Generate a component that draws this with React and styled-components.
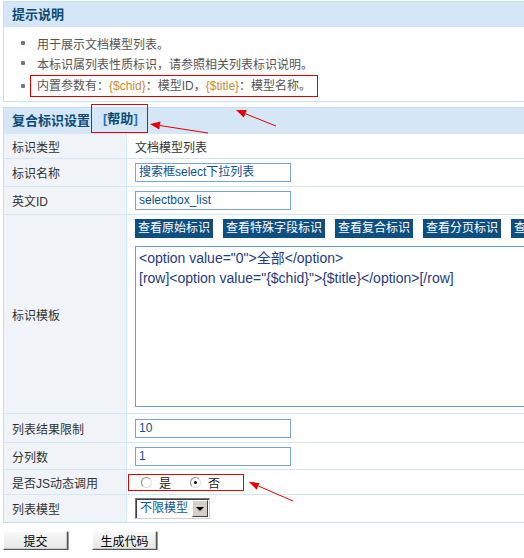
import React from "react";
import styled, { createGlobalStyle } from "styled-components";

const Global = createGlobalStyle`
  html, body { margin: 0; padding: 0; background: #fff; overflow: hidden; }
  body { font-family: "Liberation Sans", Arial, "Noto Sans CJK SC", sans-serif; font-size: 12px; color: #333; }
`;

const Page = styled.div`
  position: relative;
  width: 620px;
  padding: 1px 0 0 3px;
`;

const Panel = styled.div`
  border: 1px solid #c6e0f2;
  margin-top: ${(p) => p.$top || 0}px;
`;

const PanelHead = styled.div`
  height: 25px;
  line-height: 25px;
  padding-left: 8px;
  background: #d5e6f6;
  color: #0b4a78;
  font-size: 13px;
  font-weight: bold;
  display: flex;
  align-items: center;
  gap: 1px;
`;

const HelpLink = styled.a`
  color: #0b4a78;
  text-decoration: none;
  border: 1px solid #e60000;
  padding: 0 9px 0 11px;
  height: 27px;
  line-height: 27px;
  margin-top: -4px;
  span { color: #2a6fc0; }
`;

const Tips = styled.ul`
  list-style: none;
  margin: 0;
  padding: 6px 0 2px 0;
`;

const Tip = styled.li`
  height: ${(p) => p.$h || 20}px;
  display: flex;
  align-items: center;
  padding-left: 17px;
  color: #555;
  font-size: 12px;
  &::before {
    content: "";
    width: 4px;
    height: 4px;
    border-radius: 1px;
    background: #6a7888;
    margin-right: ${(p) => (p.$boxed ? 5 : 12)}px;
  }
`;

const Marked = styled.span`
  border: 1px solid #e60000;
  height: 20px;
  line-height: 20px;
  padding: 0 6px 0 6px;
`;

const Var = styled.span`
  color: #cc8a3a;
`;

const Row = styled.div`
  box-sizing: border-box;
  display: grid;
  grid-template-columns: 123px 1fr;
  border-top: 1px solid #d3e8f5;
  height: ${(p) => p.$h}px;
`;

const Label = styled.div`
  background: #f0f4f8;
  border-right: 1px solid #d3e8f5;
  padding-left: 8px;
  display: flex;
  align-items: center;
  color: #333;
`;

const Field = styled.div`
  padding-left: 8px;
  display: flex;
  flex-direction: ${(p) => (p.$column ? "column" : "row")};
  align-items: ${(p) => (p.$column ? "flex-start" : "center")};
  gap: ${(p) => (p.$column ? 8 : 0)}px;
  padding-top: ${(p) => (p.$column ? 4 : 0)}px;
`;

const TextInput = styled.div`
  width: 151px;
  height: 17px;
  line-height: 17px;
  border: 1px solid #7aa4d5;
  padding-left: 3px;
  color: #0d4f8f;
  font-size: 12px;
  white-space: nowrap;
`;

const TagButtons = styled.div`
  display: flex;
  gap: 10px;
  white-space: nowrap;
`;

const TagButton = styled.span`
  background: #0e4f80;
  color: #fff;
  height: 19px;
  line-height: 19px;
  padding: 0 3px;
  font-size: 12px;
`;

const Template = styled.div`
  width: 440px;
  height: 157px;
  border: 1px solid #6e9bd2;
  padding: 1px 3px;
  color: #243c80;
  font-size: 14px;
  line-height: 20px;
  white-space: pre;
`;

const Radios = styled.div`
  display: flex;
  align-items: center;
  border: 1px solid #e60000;
  height: 17px;
  width: 116px;
  margin-left: -7px;
  padding-left: 12px;
  box-sizing: border-box;
`;

const RadioDot = styled.span`
  width: 9px;
  height: 9px;
  border-radius: 50%;
  border: 1px solid #8a8a8a;
  border-right-color: #ddd;
  border-bottom-color: #ddd;
  background: #fff;
  display: inline-flex;
  align-items: center;
  justify-content: center;
  margin-right: 7px;
  &::after {
    content: "";
    width: 3px;
    height: 3px;
    border-radius: 50%;
    background: ${(p) => (p.$on ? "#000" : "transparent")};
  }
`;

const RadioText = styled.span`
  margin-right: ${(p) => p.$gap || 0}px;
  color: #222;
`;

const Select = styled.div`
  display: flex;
  height: 19px;
  border: 1px solid #7a7a7a;
  border-right-color: #d4d0c8;
  border-bottom-color: #d4d0c8;
  box-shadow: inset 1px 1px 0 #404040;
`;

const SelectText = styled.span`
  color: #0b5a9a;
  font-size: 12px;
  line-height: 19px;
  padding: 0 3px 0 4px;
`;

const SelectArrow = styled.span`
  width: 14px;
  margin: 1px;
  background: #d4d0c8;
  border: 1px solid #fff;
  border-right-color: #404040;
  border-bottom-color: #404040;
  display: flex;
  align-items: center;
  justify-content: center;
  &::after {
    content: "";
    border-left: 4px solid transparent;
    border-right: 4px solid transparent;
    border-top: 4px solid #000;
  }
`;

const Actions = styled.div`
  display: flex;
  gap: 24px;
  margin-top: 8px;
`;

const Button = styled.button`
  width: 65px;
  height: 19px;
  padding: 0;
  font-family: inherit;
  font-size: 12px;
  color: #000;
  background: linear-gradient(#f8f8f8, #e6e6e6);
  border: 1px solid #fff;
  border-right-color: #555;
  border-bottom-color: #555;
  box-shadow: 1px 1px 0 #999, inset -1px -1px 0 #c8c8c8;
`;

const Marks = styled.svg`
  position: absolute;
  left: 0;
  top: 0;
  pointer-events: none;
`;

// red annotation arrow, head at (x2, y2)
function Arrow({ x1, y1, x2, y2 }) {
  const dx = x1 - x2;
  const dy = y1 - y2;
  const len = Math.hypot(dx, dy);
  const ux = dx / len;
  const uy = dy / len;
  const bx = x2 + ux * 10;
  const by = y2 + uy * 10;
  const px = -uy * 4;
  const py = ux * 4;
  return (
    <g>
      <line x1={x1} y1={y1} x2={bx} y2={by} stroke="#e60000" strokeWidth="1" />
      <polygon
        points={`${x2},${y2} ${bx + px},${by + py} ${bx - px},${by - py}`}
        fill="#e60000"
      />
    </g>
  );
}

export default function App() {
  return (
    <Page>
      <Global />
      <Panel>
        <PanelHead>提示说明</PanelHead>
        <Tips>
          <Tip>用于展示文档模型列表。</Tip>
          <Tip>本标识属列表性质标识，请参照相关列表标识说明。</Tip>
          <Tip $h={26} $boxed>
            <Marked>
              内置参数有：<Var>{"{$chid}"}</Var>：模型ID，<Var>{"{$title}"}</Var>：模型名称。
            </Marked>
          </Tip>
        </Tips>
      </Panel>

      <Panel $top={5}>
        <PanelHead>
          复合标识设置
          <HelpLink><span>[</span>帮助<span>]</span></HelpLink>
        </PanelHead>
        <Row $h={25}>
          <Label>标识类型</Label>
          <Field>文档模型列表</Field>
        </Row>
        <Row $h={28}>
          <Label>标识名称</Label>
          <Field><TextInput>搜索框select下拉列表</TextInput></Field>
        </Row>
        <Row $h={28}>
          <Label>英文ID</Label>
          <Field><TextInput>selectbox_list</TextInput></Field>
        </Row>
        <Row $h={199}>
          <Label>标识模板</Label>
          <Field $column>
            <TagButtons>
              <TagButton>查看原始标识</TagButton>
              <TagButton>查看特殊字段标识</TagButton>
              <TagButton>查看复合标识</TagButton>
              <TagButton>查看分页标识</TagButton>
              <TagButton>查看</TagButton>
            </TagButtons>
            <Template>
              {'<option value="0">全部</option>\n[row]<option value="{$chid}">{$title}</option>[/row]'}
            </Template>
          </Field>
        </Row>
        <Row $h={29}>
          <Label>列表结果限制</Label>
          <Field><TextInput>10</TextInput></Field>
        </Row>
        <Row $h={27}>
          <Label>分列数</Label>
          <Field><TextInput>1</TextInput></Field>
        </Row>
        <Row $h={25}>
          <Label>是否JS动态调用</Label>
          <Field>
            <Radios>
              <RadioDot />
              <RadioText $gap={19}>是</RadioText>
              <RadioDot $on />
              <RadioText>否</RadioText>
            </Radios>
          </Field>
        </Row>
        <Row $h={28}>
          <Label>列表模型</Label>
          <Field>
            <Select>
              <SelectText>不限模型</SelectText>
              <SelectArrow />
            </Select>
          </Field>
        </Row>
      </Panel>

      <Actions>
        <Button>提交</Button>
        <Button>生成代码</Button>
      </Actions>

      <Marks width="620" height="560">
        <Arrow x1={276} y1={126} x2={236} y2={110} />
        <Arrow x1={208} y1={133} x2={150} y2={124} />
        <Arrow x1={293} y1={501} x2={249} y2={482} />
      </Marks>
    </Page>
  );
}
